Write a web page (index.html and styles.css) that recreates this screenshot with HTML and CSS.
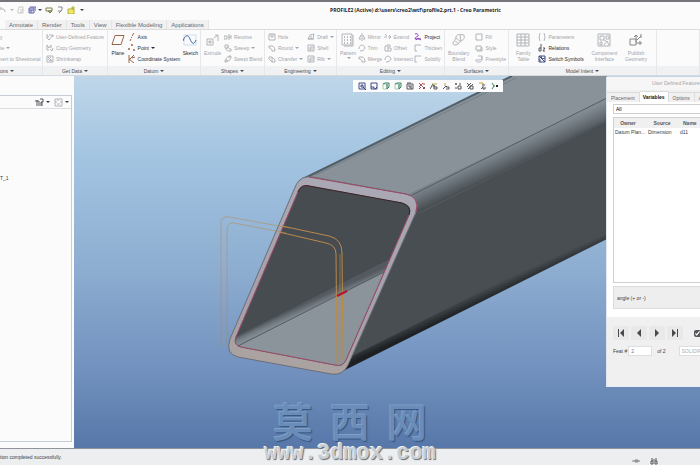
FILE: index.html
```html
<!DOCTYPE html>
<html lang="en">
<head>
<meta charset="utf-8">
<title>PROFILE2 (Active) - Creo Parametric</title>
<link rel="stylesheet" href="styles.css">
</head>
<body>
<svg class="defs" aria-hidden="true">
  <symbol id="i-udf" viewBox="0 0 8 8"><path d="M1 1v4l2 2 4-5M3 2h4v2M1 3l2 1"/></symbol>
  <symbol id="i-copy" viewBox="0 0 8 8"><path d="M1 1v5h2M1 1l2 3 2-3v3M4 5l2 2 1-3"/></symbol>
  <symbol id="i-shrink" viewBox="0 0 8 8"><path d="M1 1h6v6H1zM2 2l4 4M5 2L2 5M3 6l3-1"/></symbol>
  <symbol id="i-plane" viewBox="0 0 14 12"><path d="M4 1.500h9l-3 9H1z"/></symbol>
  <symbol id="i-axis" viewBox="0 0 8 8"><path d="M6 0L4 3M4 4L3 5M3 6L2 8"/></symbol>
  <symbol id="i-point" viewBox="0 0 8 8"><path d="M3 1h2M4 0v2M0 5h2M1 4v2M5 6h2M6 5v2"/></symbol>
  <symbol id="i-csys" viewBox="0 0 8 8"><path d="M1 0v8M1 4l5 4M1 5l5-5M4 3l3-1"/></symbol>
  <symbol id="i-sketch" viewBox="0 0 14 12"><path class="faint" d="M1 1h12v10H1z"/><path d="M0 7C2 1 5 0 7 5s4 6 6 1"/></symbol>
  <symbol id="i-extrude" viewBox="0 0 14 12"><path d="M1 5h6v6H1zM8 4l4-3M9 1h3v6M3 7h2v2H3z"/></symbol>
  <symbol id="i-revolve" viewBox="0 0 8 8"><path d="M0 3h3v3H0zM4 4h3M5 1v6M7 2v4"/></symbol>
  <symbol id="i-sweep" viewBox="0 0 8 8"><path d="M1 1h3v3H1zM2 4c0 3 2 3 5 3M4 2c0 2 1 3 3 3v2"/></symbol>
  <symbol id="i-blend" viewBox="0 0 8 8"><path d="M1 5h2v2H1zM2 5c0-3 2-3 4-4M3 6c3 0 4-2 4-5H5v2"/></symbol>
  <symbol id="i-hole" viewBox="0 0 8 8"><path d="M1 1h6v6H1zM3 1v3h2V1"/></symbol>
  <symbol id="i-round" viewBox="0 0 8 8"><path d="M1 2h3c2 0 3 2 3 5H4c0-2-1-3-3-3z"/></symbol>
  <symbol id="i-chamfer" viewBox="0 0 8 8"><path d="M1 2h3l3 3v2H4L1 4zM4 2v5"/></symbol>
  <symbol id="i-draft" viewBox="0 0 8 8"><path d="M1 6l2-4 4-1-1 5zM1 6h6M4 3v3"/></symbol>
  <symbol id="i-shell" viewBox="0 0 8 8"><path d="M1 1h6v6H1zM3 3h4M3 3v4M3 5h3"/></symbol>
  <symbol id="i-pattern" viewBox="0 0 14 14"><path d="M1 1h10v11H1zM12 2v11H3"/><path class="dots" d="M3 4h7M3 7h7M3 10h7"/></symbol>
  <symbol id="i-mirror" viewBox="0 0 8 8"><path d="M4 0v8M3 2L1 6h2M5 2l2 4H5"/></symbol>
  <symbol id="i-trim" viewBox="0 0 8 8"><path d="M1 5c0-5 5-5 6-1M2 7c3 0 4-1 5-3"/></symbol>
  <symbol id="i-extend" viewBox="0 0 8 8"><path d="M0 4h3M4 4h3M5 2l2 2-2 2M1 1l2 2"/></symbol>
  <symbol id="i-offset" viewBox="0 0 8 8"><path d="M1 2h3v5H1zM4 4h3v3H4M3 1h3v2"/></symbol>
  <symbol id="i-project" viewBox="0 0 8 8"><path d="M1 1c2-1 4 1 3 2s-3 1-3 3h6M2 7l2-2 3 2"/></symbol>
  <symbol id="i-open" viewBox="0 0 8 8"><path d="M7 1H1v6h2"/></symbol>
  <symbol id="i-boundary" viewBox="0 0 14 12"><path d="M1 9c1-3 2-2 3-6s6-2 8-2c1 4-1 5-3 6s-3 4-5 4-3 0-3-2zM4 4l5 4M8 1l1 6M3 7l4 3"/></symbol>
  <symbol id="i-fill" viewBox="0 0 8 8"><path d="M1 1h6v6H1z"/></symbol>
  <symbol id="i-style" viewBox="0 0 8 8"><path d="M1 2h5v4H1zM2 7h5V3"/></symbol>
  <symbol id="i-free" viewBox="0 0 8 8"><path d="M3 1h4v4c0 2-5 3-6 1s1-1 3-1 3-1 3-3"/></symbol>
  <symbol id="i-table" viewBox="0 0 14 14"><path d="M1 1h12v12H1zM1 4h12M1 7h12M1 10h12M5 1v12M9 1v12"/></symbol>
  <symbol id="i-paren" viewBox="0 0 8 8"><path d="M2 0Q0 4 2 8M6 0q2 4 0 8"/></symbol>
  <symbol id="i-rel" viewBox="0 0 8 8"><path d="M3 0v7H1V4h2M5 4h2L5 7h2"/></symbol>
  <symbol id="i-switch" viewBox="0 0 8 8"><path d="M1 1h6v6H1zM1 1l6 6M3 1l1 3 3-1M2 4v3"/></symbol>
  <symbol id="i-comp" viewBox="0 0 14 14"><path d="M1 1h12v12H1zM3 3h4v4H3zM9 3h3v3H9zM3 9h2v3H3zM7 12l3-4 2 4M7 7l2 1"/></symbol>
  <symbol id="i-publish" viewBox="0 0 14 14"><path d="M1 6h6v6H1zM7 9V2l-2 2M7 2l2 2M8 7l4-4M12 1v4M7 10h6M11 8v4"/></symbol>
  <symbol id="i-zoomfit" viewBox="0 0 8 8"><path d="M1 1h6v6H1z"/><path d="M3 3h2v2H3zM5 5l3 3"/></symbol>
  <symbol id="i-repaint" viewBox="0 0 8 8"><path d="M1 1h6v6H1z"/><path d="M1 5h3v2M5 7l2-2"/></symbol>
  <symbol id="i-cube" viewBox="0 0 8 8"><path class="lite" d="M1 2h4v5H1z"/><path d="M1 2l2-1h4v4L5 7M5 2v5"/></symbol>
  <symbol id="i-cam" viewBox="0 0 8 8"><path d="M1 2h6v5H1zM2 4h4M3 5h2v2M1 1h4"/></symbol>
  <symbol id="i-datum" viewBox="0 0 8 8"><path class="red" d="M1 1l6 6M1 5l4-4M5 2h2"/><path d="M1 7l2-2M5 7l2-2"/></symbol>
  <symbol id="i-xy" viewBox="0 0 8 8"><path d="M1 1l2 2M1 5l4-4M4 4h3v3H4zM2 7l5-5"/></symbol>
  <symbol id="i-annot" viewBox="0 0 8 8"><path class="gold" d="M2 2h5"/><path d="M0 7l3-5M3 5l1-2 1 2M4 5h3v2H4z"/></symbol>
</svg>

<div class="app">
  <header class="titlebar">
    <div class="quick">
      <button class="qb" aria-label="Undo"><svg class="s"><path d="M0 3h3q2 0 2 3M1 1v2"/></svg><i class="dd lite"></i></button>
      <button class="qb" aria-label="Regenerate"><svg class="s pale"><path d="M2 1h4v6H1V4zM3 4h3M3 6h2"/></svg></button>
      <button class="qb" aria-label="Windows"><svg class="s indigo"><path d="M1 2h5v5H1zM2 1h6v4M1 4h5M3 4v3"/></svg><i class="dd"></i></button>
      <button class="qb" aria-label="Open"><svg class="s olive"><path d="M1 2h6v3H1zM3 5h4L5 7z"/></svg></button>
      <button class="qb" aria-label="Save"><svg class="s dim"><path d="M2 1h4v3L3 7M2 5h3"/></svg></button>
      <button class="qb" aria-label="Close"><svg class="s yellow"><path d="M1 3h6v5H1zM5 3V1h2v2z"/></svg></button>
      <button class="qb" aria-label="Customize"><i class="dd"></i></button>
    </div>
    <h1>PROFILE2 (Active) d:\users\creo2\wtf\profile2.prt.1 - Creo Parametric</h1>
  </header>

  <nav class="tabs">
    <button>Annotate</button><button>Render</button><button>Tools</button><button>View</button><button>Flexible Modeling</button><button>Applications</button>
  </nav>

  <section class="ribbon">
    <div class="group g-ops">
      <div class="tools"><div class="col"><button class="cmd">y</button><button class="cmd">te<i class="dd"></i></button><button class="cmd">vert to Sheetmetal</button></div></div>
      <button class="cap">ons<i class="dd"></i></button>
    </div>
    <div class="group">
      <div class="tools"><div class="col">
        <button class="cmd"><svg class="s"><use href="#i-udf"/></svg>User-Defined Feature</button>
        <button class="cmd"><svg class="s"><use href="#i-copy"/></svg>Copy Geometry</button>
        <button class="cmd"><svg class="s"><use href="#i-shrink"/></svg>Shrinkwrap</button>
      </div></div>
      <button class="cap">Get Data<i class="dd"></i></button>
    </div>
    <div class="group">
      <div class="tools">
        <button class="big on"><svg class="b brown"><use href="#i-plane"/></svg>Plane</button>
        <div class="col">
          <button class="cmd on"><svg class="s brown"><use href="#i-axis"/></svg>Axis</button>
          <button class="cmd on"><svg class="s brown"><use href="#i-point"/></svg>Point<i class="dd"></i></button>
          <button class="cmd on"><svg class="s brown"><use href="#i-csys"/></svg>Coordinate System</button>
        </div>
        <button class="big on"><svg class="b blue"><use href="#i-sketch"/></svg>Sketch</button>
      </div>
      <button class="cap">Datum<i class="dd"></i></button>
    </div>
    <div class="group">
      <div class="tools">
        <button class="big"><svg class="b"><use href="#i-extrude"/></svg>Extrude</button>
        <div class="col">
          <button class="cmd"><svg class="s"><use href="#i-revolve"/></svg>Revolve</button>
          <button class="cmd"><svg class="s"><use href="#i-sweep"/></svg>Sweep<i class="dd"></i></button>
          <button class="cmd"><svg class="s"><use href="#i-blend"/></svg>Swept Blend</button>
        </div>
      </div>
      <button class="cap">Shapes<i class="dd"></i></button>
    </div>
    <div class="group">
      <div class="tools">
        <div class="col">
          <button class="cmd"><svg class="s"><use href="#i-hole"/></svg>Hole</button>
          <button class="cmd"><svg class="s"><use href="#i-round"/></svg>Round<i class="dd"></i></button>
          <button class="cmd"><svg class="s"><use href="#i-chamfer"/></svg>Chamfer<i class="dd"></i></button>
        </div>
        <div class="col">
          <button class="cmd"><svg class="s"><use href="#i-draft"/></svg>Draft<i class="dd"></i></button>
          <button class="cmd"><svg class="s"><use href="#i-shell"/></svg>Shell</button>
          <button class="cmd"><svg class="s"><use href="#i-shell"/></svg>Rib<i class="dd"></i></button>
        </div>
      </div>
      <button class="cap">Engineering<i class="dd"></i></button>
    </div>
    <div class="group">
      <div class="tools">
        <button class="big"><svg class="b"><use href="#i-pattern"/></svg>Pattern<i class="dd"></i></button>
        <div class="col">
          <button class="cmd"><svg class="s"><use href="#i-mirror"/></svg>Mirror</button>
          <button class="cmd"><svg class="s"><use href="#i-trim"/></svg>Trim</button>
          <button class="cmd"><svg class="s"><use href="#i-round"/></svg>Merge</button>
        </div>
        <div class="col">
          <button class="cmd"><svg class="s"><use href="#i-extend"/></svg>Extend</button>
          <button class="cmd"><svg class="s"><use href="#i-offset"/></svg>Offset</button>
          <button class="cmd"><svg class="s"><use href="#i-trim"/></svg>Intersect</button>
        </div>
        <div class="col">
          <button class="cmd on"><svg class="s violet"><use href="#i-project"/></svg>Project</button>
          <button class="cmd"><svg class="s"><use href="#i-open"/></svg>Thicken</button>
          <button class="cmd"><svg class="s"><use href="#i-open"/></svg>Solidify</button>
        </div>
      </div>
      <button class="cap">Editing<i class="dd"></i></button>
    </div>
    <div class="group">
      <div class="tools">
        <button class="big"><svg class="b"><use href="#i-boundary"/></svg>Boundary<br>Blend</button>
        <div class="col">
          <button class="cmd"><svg class="s"><use href="#i-fill"/></svg>Fill</button>
          <button class="cmd"><svg class="s"><use href="#i-style"/></svg>Style</button>
          <button class="cmd"><svg class="s"><use href="#i-free"/></svg>Freestyle</button>
        </div>
      </div>
      <button class="cap">Surfaces<i class="dd"></i></button>
    </div>
    <div class="group g-intent">
      <div class="tools">
        <button class="big"><svg class="b"><use href="#i-table"/></svg>Family<br>Table</button>
        <div class="col">
          <button class="cmd"><svg class="s"><use href="#i-paren"/></svg>Parameters</button>
          <button class="cmd on"><svg class="s dark"><use href="#i-rel"/></svg>Relations</button>
          <button class="cmd on"><svg class="s navy"><use href="#i-switch"/></svg>Switch Symbols</button>
        </div>
        <button class="big"><svg class="b"><use href="#i-comp"/></svg>Component<br>Interface</button>
        <button class="big"><svg class="b dim"><use href="#i-publish"/></svg>Publish<br>Geometry</button>
      </div>
      <button class="cap">Model Intent<i class="dd"></i></button>
    </div>
    <div class="group"><div class="tools"></div><div class="cap"></div></div>
  </section>

  <main class="work">
    <aside class="tree">
      <div class="treebox">
        <div class="treebar">
          <button class="qb" aria-label="Settings"><svg class="t dark"><path d="M0 3h4M2 2v6M4 3v5M5 1h3v3H6v4M7 4v4"/></svg><i class="dd"></i></button>
          <button class="qb" aria-label="Show"><svg class="t"><path d="M1 1h7v7H1zM1 4h2M6 4h2M3 6h3M4 1v2"/></svg><i class="dd"></i></button>
        </div>
        <p>T_1</p>
      </div>
    </aside>
    <div class="view">
      <svg class="scene" viewBox="74 76 626 372" preserveAspectRatio="xMinYMin slice" role="img" aria-label="Hollow rectangular profile">
        <defs>
          <linearGradient id="fillet" gradientUnits="userSpaceOnUse" x1="500" y1="147" x2="510" y2="169">
            <stop offset="0" stop-color="#88919a"/><stop offset=".45" stop-color="#6f777e"/><stop offset="1" stop-color="#4a5054"/>
          </linearGradient>
          <linearGradient id="inner" gradientUnits="userSpaceOnUse" x1="308" y1="302" x2="313" y2="313">
            <stop offset="0" stop-color="#53595e"/><stop offset=".6" stop-color="#7e868d"/><stop offset="1" stop-color="#8b939a"/>
          </linearGradient>
          <linearGradient id="under" gradientUnits="userSpaceOnUse" x1="477" y1="292" x2="482" y2="303">
            <stop offset="0" stop-color="#484e52"/><stop offset="1" stop-color="#1c2023"/>
          </linearGradient>
          <linearGradient id="rim" gradientUnits="userSpaceOnUse" x1="330" y1="177" x2="300" y2="372">
            <stop offset="0" stop-color="#aaa8b4"/><stop offset=".7" stop-color="#a5a0ab"/><stop offset="1" stop-color="#aaa39f"/>
          </linearGradient>
          <clipPath id="hole"><path d="M298 192Q301 184 309 186L402 203Q413 206 409 215L346 360Q343 367 335 365L241 347Q233 345 236 337Z"/></clipPath>
        </defs>
        <path fill="#8a9299" d="M303 178L512 76H607V100L412 197Z"/>
        <path fill="url(#fillet)" d="M408 194L607 98V121L416 214Z"/>
        <path fill="#484e52" d="M416 213L607 120V238L347 368L340 360Z"/>
        <path fill="url(#under)" d="M352 356L607 229V239L345 370Q337 375 334 374Z"/>
        <path class="edge" d="M303 179L512 76"/>
        <path class="soft" d="M316 175L516 78"/>
        <path class="line" d="M412 195L607 98M417 214L607 121"/>
        <path fill="url(#rim)" stroke="#6b6e76" fill-rule="evenodd" d="M296 185Q301 175 313 177L406 194Q421 197 416 212L348 365Q343 376 331 374L238 357Q225 354 230 339ZM298 192Q301 184 309 186L402 203Q413 206 409 215L346 360Q343 367 335 365L241 347Q233 345 236 337Z"/>
        <g clip-path="url(#hole)">
          <path fill="#464c50" d="M225 170h200v210H225z"/>
          <path fill="url(#inner)" d="M228 341L400 254V266L232 350Z"/>
          <path fill="#8b939b" d="M230 350L400 264V380H230Z"/>
          <path class="line" d="M232 349L400 264M232 340L392 259"/>
        </g>
        <path class="crimson" d="M309 177L406 194Q420 197 416 212M309 186Q301 184 298 192L236 337Q233 345 241 347L335 365Q343 367 346 360L409 215"/>
        <path class="deep" d="M298 192Q301 184 309 186L402 203Q412 206 409 215"/>
        <g class="sketch">
          <path opacity=".5" d="M221 346V223Q221 216 229 217L290 228M227 346V230Q227 222 234 223L286 233"/>
          <path d="M282 226L329 236Q342 239 342 253L343 360M279 232L326 243Q336 245 336 254L337 364"/>
          <path opacity=".6" d="M340 254V363"/>
        </g>
        <path class="arrow" d="M337 296L347 291"/>
      </svg>
      <div class="viewbar">
        <button aria-label="Refit"><svg class="s navy"><use href="#i-zoomfit"/></svg></button>
        <button aria-label="Repaint"><svg class="s navy"><use href="#i-repaint"/></svg></button>
        <button aria-label="Display style"><svg class="s green"><use href="#i-cube"/></svg></button>
        <button aria-label="Saved orientations"><svg class="s green"><use href="#i-cube"/></svg></button>
        <button aria-label="View manager"><svg class="s dark"><use href="#i-cam"/></svg></button>
        <button aria-label="Datum display"><svg class="s dark"><use href="#i-datum"/></svg></button>
        <button aria-label="Planes"><svg class="s dark"><use href="#i-annot"/></svg></button>
        <button aria-label="Axes"><svg class="s dark"><path class="gold" d="M3 1v3"/><path d="M1 7l3-3 1 1M4 5h3v2H4"/></svg></button>
        <button aria-label="Points"><svg class="s dark"><path d="M1 2h2M2 1v2M5 2h2M4 4h3v3H4zM1 6h2"/></svg></button>
        <button aria-label="Coordinate systems"><svg class="s dark"><use href="#i-xy"/></svg></button>
        <button aria-label="Annotations"><svg class="s dark"><path class="gold" d="M1 1h4v2"/><path d="M4 3h3M5 4v3h2V5M3 7l2-2"/></svg></button>
        <button aria-label="Spin center"><svg class="s green"><path d="M2 1l2 3-2 3M4 4h1"/><path class="blk" d="M6 4h2"/></svg></button>
      </div>
    </div>

    <section class="dialog">
      <h2>User Defined Feature</h2>
      <div class="dtabs"><button>Placement</button><button class="active">Variables</button><button>Options</button><button>Adjustments</button></div>
      <div class="dbody">
        <select aria-label="Filter"><option>All</option></select>
        <div class="tablebox">
          <table>
            <thead><tr><th>Owner</th><th>Source</th><th>Name</th></tr></thead>
            <tbody><tr><td>Datum Plan...</td><td>Dimension</td><td>d11</td></tr></tbody>
          </table>
        </div>
        <p class="prompt">angle (+ or -)</p>
      </div>
      <div class="dfoot">
        <div class="steps">
          <button aria-label="First"><svg class="s fillk"><path d="M1 0h1v8H1zM7 0v8L3 4z"/></svg></button>
          <button aria-label="Previous"><svg class="s fillk"><path d="M6 0v8L2 4z"/></svg></button>
          <button aria-label="Next"><svg class="s fillk"><path d="M2 0v8l4-4z"/></svg></button>
          <button aria-label="Last"><svg class="s fillk"><path d="M6 0h1v8H6zM1 0v8l4-4z"/></svg></button>
          <input type="checkbox" checked aria-label="Preview">
        </div>
        <div class="feat">
          <label for="feat">Feat #</label><input id="feat" type="text" value="2">
          <span>of 2</span><input class="dis" type="text" value="SOLIDIFY" aria-label="Feature name" disabled>
        </div>
      </div>
    </section>
  </main>

  <footer class="status">
    <span>tion completed successfully.</span>
    <div class="sicons">
      <svg class="s dim"><path d="M0 4h8M3 3h3v2H3z"/></svg>
      <svg class="s dark"><path d="M1 4h2v3H1zM5 4h2v3H5zM2 4V1M6 4V1M3 3h2"/></svg>
    </div>
  </footer>

  <div class="mark"><div class="cjk"><span>莫</span><span>西</span><span>网</span></div><div class="url">www.3dmox.com</div></div>
</div>
</body>
</html>
```

FILE: styles.css
```css
* { box-sizing: border-box; margin: 0; padding: 0; }
html, body { height: 100%; overflow: hidden; }
body, button, input, select { font: 5px/6px "Liberation Sans", Arial, sans-serif; }
button { border: 0; background: none; color: inherit; white-space: nowrap; }
.defs { position: absolute; width: 0; height: 0; }
.app { position: relative; display: flex; flex-direction: column; height: 100vh; background: #fbfbfc; color: #3c3c40; }

/* icons */
svg.s, svg.b, svg.t { flex: none; fill: none; stroke: #b2b4b8; stroke-width: 1; width: 8px; height: 8px; }
svg.b { width: 14px; height: 14px; }
svg.t { width: 9px; height: 9px; }
svg .faint { stroke: #cfdcec; }
svg .lite { stroke: #a9cdb9; }
svg .dots { stroke-dasharray: 1 2; stroke: #777; }
svg .red { stroke: #b05050; }
svg .gold { stroke: #c0a23c; }
svg .blk { stroke: #222; stroke-width: 2; }
svg.pale { stroke: #c9cabf; }
svg.dim { stroke: #84868a; }
svg.dark { stroke: #55575c; }
svg.brown { stroke: #9a6448; }
svg.blue { stroke: #3b68a4; }
svg.navy { stroke: #3c4c86; }
svg.violet { stroke: #9143b8; }
svg.green { stroke: #35805a; }
svg.olive { stroke: #7d8048; }
svg.indigo { stroke: #6669ae; fill: #d9daf2; }
svg.yellow { stroke: #b4ae3c; fill: #f2ea62; }
svg.fillk { fill: #47494d; stroke: none; }
.dd { flex: none; margin-left: 2px; border: 2px solid transparent; border-top-color: currentColor; border-bottom: 0; }
.dd.lite { color: #b4b4b8; }

/* title and tabs */
.titlebar { flex: none; display: flex; align-items: center; height: 18px; border-top: 2px solid #77757a; position: relative; }
.quick { display: flex; align-items: center; gap: 3px; }
.qb { display: flex; align-items: center; }
.titlebar h1 { position: absolute; left: 330px; font: bold 5px/6px "Open Sans", sans-serif; color: #222226; white-space: nowrap; }
.tabs { flex: none; display: flex; height: 12px; padding: 2px 0 0 5px; border-bottom: 1px solid #dcdcde; }
.tabs button { padding: 0 4px; font-size: 6px; background: #f1f1f2; border-right: 1px solid #e4e4e6; color: #67676b; }

/* ribbon */
.ribbon { flex: none; display: grid; grid-template-columns: 43px 65px 93px 64px 72px 108px 64px 148px 1fr; height: 46px; border-bottom: 1px solid #d5dade; }
.group { display: flex; flex-direction: column; min-width: 0; border-right: 1px solid #e6e7e9; color: #a2a3a8; }
.tools { flex: 1; display: flex; justify-content: space-between; padding: 1px 2px 0 3px; }
.g-ops .tools { padding-left: 0; }
.g-intent .tools { padding: 1px 9px 0 7px; }
.col { display: flex; flex-direction: column; }
.cmd { display: flex; align-items: center; gap: 2px; height: 11px; }
.cmd .dd { margin-left: 0; }
.big { display: flex; flex-direction: column; align-items: center; gap: 1px; padding-top: 2px; }
.big svg { margin-bottom: 2px; }
.on { color: #2c2c30; }
.cap { display: flex; align-items: center; justify-content: center; height: 9px; background: #eff1f3; color: #4c4d52; }
.g-ops .cap { justify-content: flex-start; }

/* work area */
.work { flex: 1; display: flex; min-height: 0; position: relative; overflow: hidden; }
.tree { flex: none; width: 74px; padding: 19px 2px 6px 0; }
.treebox { height: 100%; border: 1px solid #c6ccd6; border-left: 0; }
.treebar { display: flex; justify-content: flex-end; gap: 4px; height: 13px; padding-right: 2px; border-bottom: 1px solid #dcdee2; }
.treebox p { margin-top: 66px; }
.view { flex: 1; position: relative; min-width: 0; background: linear-gradient(#bfd6e9 0, #a3c4e1 22%, #8fafd2 50%, #7392bf 78%, #5677a8 100%); }
.scene { display: block; width: 100%; height: 100%; }
.edge { stroke: #525e68; stroke-width: 2; }
.soft { stroke: #747e87; }
.line { stroke: #555c63; fill: none; stroke-width: 1; }
.crimson { stroke: #9d4a66; fill: none; }
.deep { stroke: #3c2228; fill: none; }
.sketch { stroke: #b98a4a; fill: none; }
.arrow { stroke: #b5152c; fill: none; stroke-width: 2; }
.viewbar { position: absolute; left: 279px; top: 4px; display: flex; background: #fbfbfb; height: 12px; padding: 0 3px; }
.viewbar button { display: flex; align-items: center; justify-content: center; width: 12px; }

/* dialog */
.dialog { position: absolute; right: 0; top: 1px; width: 94px; overflow: hidden; background: #f0f0f1; border-left: 1px solid #dfe6ee; border-bottom: 1px solid #e8eef5; white-space: nowrap; }
.dialog h2 { height: 13px; padding: 3px 0 0 45px; font-size: 5px; font-weight: normal; color: #a4a4a8; background: #f6f6f7; }
.dtabs { display: flex; align-items: flex-end; height: 12px; }
.dtabs button { height: 10px; padding: 0 4px; border: 1px solid #dcdcde; border-width: 1px 1px 0 0; color: #66676b; }
.dtabs .active { height: 11px; padding: 0 3px; background: #fff; color: #111; font-weight: bold; }
.dbody { display: flex; flex-direction: column; gap: 3px; padding: 2px 0 8px 6px; background: #fff; }
.dbody select { appearance: none; width: 120px; height: 10px; padding-left: 2px; border: 1px solid #d0d0d3; background: #fff; }
.tablebox { height: 166px; border: 1px solid #d0d0d3; border-right: 0; }
table { width: 92px; table-layout: fixed; border-collapse: collapse; }
th { height: 10px; background: #f0f0f1; text-align: center; font-weight: bold; color: #55565a; }
td { height: 8px; padding-left: 1px; }
th:first-child { width: 31px; padding-right: 3px; }
th:nth-child(2) { width: 34px; }
th:nth-child(3) { text-align: left; padding-left: 4px; }
td:nth-child(2) { padding-left: 3px; }
.prompt { height: 23px; padding: 8px 3px; background: #eee; border: 1px solid #dcdcde; border-right: 0; }
.dfoot { padding: 9px 0 30px 6px; }
.steps { display: flex; align-items: center; gap: 2px; }
.steps button { display: flex; align-items: center; justify-content: center; flex: none; width: 16px; height: 14px; background: #e9e9ea; }
.steps input { flex: none; width: 7px; height: 7px; margin-left: 9px; accent-color: #55565a; }
.feat { display: flex; align-items: center; margin-top: 6px; }
.feat input { flex: none; width: 24px; height: 10px; padding: 0 2px; border: 1px solid #dedee0; background: #fff; color: #777; }
.feat label { margin-right: 1px; }
.feat span { margin: 0 13px 0 5px; }
.feat .dis { width: 40px; color: #aaa; }

.status { flex: none; display: flex; justify-content: space-between; align-items: center; height: 17px; border-top: 1px solid #8f959c; background: #eceef0; }
.sicons { display: flex; gap: 10px; margin-right: 42px; padding-top: 8px; }

/* watermark */
.mark { position: absolute; left: 0; right: 0; bottom: 0; display: flex; flex-direction: column; align-items: center; pointer-events: none; }
.cjk { display: flex; gap: 17px; font: 500 40px/46px "Noto Sans CJK SC", sans-serif; color: #6a8cb8; text-shadow: -1px -1px 0 #7f9fc6, 1px 1px 1px #35547e; }
.url { font: bold 22px/22px "Liberation Mono", monospace; color: #c9ced3; text-shadow: -1px -1px 0 #eef2f5, 1px 1px 1px #666e76; }
```
